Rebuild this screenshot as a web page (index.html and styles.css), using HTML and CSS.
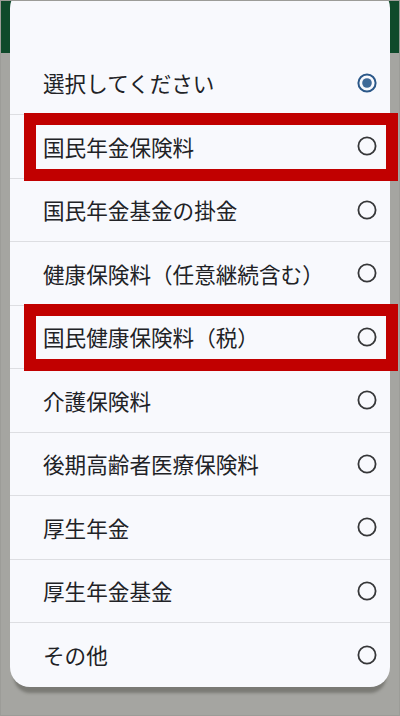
FILE: index.html
```html
<!DOCTYPE html>
<html lang="ja">
<head>
<meta charset="utf-8">
<link rel="stylesheet" href="styles.css">
</head>
<body>
<div class="screen">
  <div class="header"></div>
  <div class="dialog">
    <div class="row"><span class="label">選択してください</span><svg class="radio" viewBox="0 0 20 20"><circle cx="10" cy="10" r="8.6" class="on"/><circle cx="10" cy="10" r="4.8" class="dot"/></svg></div>
    <div class="row"><span class="label">国民年金保険料</span><svg class="radio" viewBox="0 0 20 20"><circle cx="10" cy="10" r="8.6" class="off"/></svg><div class="mark"></div></div>
    <div class="row"><span class="label">国民年金基金の掛金</span><svg class="radio" viewBox="0 0 20 20"><circle cx="10" cy="10" r="8.6" class="off"/></svg></div>
    <div class="row"><span class="label">健康保険料（任意継続含む）</span><svg class="radio" viewBox="0 0 20 20"><circle cx="10" cy="10" r="8.6" class="off"/></svg></div>
    <div class="row"><span class="label">国民健康保険料（税）</span><svg class="radio" viewBox="0 0 20 20"><circle cx="10" cy="10" r="8.6" class="off"/></svg><div class="mark"></div></div>
    <div class="row"><span class="label">介護保険料</span><svg class="radio" viewBox="0 0 20 20"><circle cx="10" cy="10" r="8.6" class="off"/></svg></div>
    <div class="row"><span class="label">後期高齢者医療保険料</span><svg class="radio" viewBox="0 0 20 20"><circle cx="10" cy="10" r="8.6" class="off"/></svg></div>
    <div class="row"><span class="label">厚生年金</span><svg class="radio" viewBox="0 0 20 20"><circle cx="10" cy="10" r="8.6" class="off"/></svg></div>
    <div class="row"><span class="label">厚生年金基金</span><svg class="radio" viewBox="0 0 20 20"><circle cx="10" cy="10" r="8.6" class="off"/></svg></div>
    <div class="row"><span class="label">その他</span><svg class="radio" viewBox="0 0 20 20"><circle cx="10" cy="10" r="8.6" class="off"/></svg></div>
  </div>
</div>
</body>
</html>
```
FILE: styles.css
```css
html, body {
  margin: 0;
  padding: 0;
  background: #a5a5a1;
}
body {
  width: 400px;
  height: 716px;
  overflow: hidden;
  font-family: "Noto Sans CJK JP", "Noto Sans", sans-serif;
}
.screen {
  box-sizing: border-box;
  width: 400px;
  height: 716px;
  border: 1px solid #9c9c98;
  background-color: #a5a5a1;
  overflow: hidden;
}
.header {
  height: 52px;
  background: #0f4a2b;
}
.dialog {
  position: relative;
  z-index: 1;
  margin: -65px 9px 0 9px;
  padding-top: 63.5px;
  background: #f8f9fd;
  border-radius: 20px;
  box-shadow: 0 10px 3px -4px rgba(70, 70, 65, 0.45);
}
.row {
  position: relative;
  box-sizing: border-box;
  height: 63.5px;
  display: flex;
  align-items: center;
  justify-content: space-between;
  padding: 0 13px 0 33px;
  border-bottom: 1px solid #dddee2;
}
.row:last-child {
  border-bottom: none;
}
.label {
  font-size: 21.6px;
  color: #212226;
}
.radio {
  width: 20px;
  height: 20px;
  display: block;
}
.radio .on {
  fill: none;
  stroke: #2b5889;
  stroke-width: 2;
}
.radio .dot {
  fill: #3e6a98;
}
.radio .off {
  fill: none;
  stroke: #363739;
  stroke-width: 1.8;
}
.mark {
  position: absolute;
  left: 14px;
  right: -8px;
  top: -2px;
  bottom: -3px;
  border: 12px solid #c10000;
  pointer-events: none;
}
```
